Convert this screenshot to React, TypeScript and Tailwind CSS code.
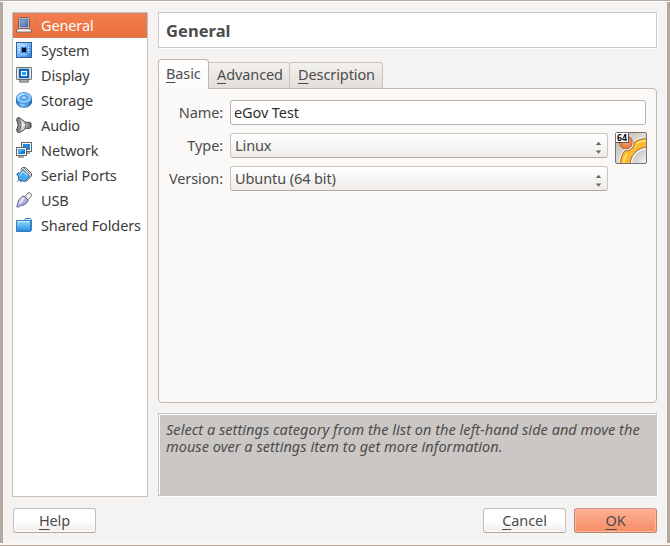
import type { ReactNode } from "react";

const Laptop = () => (
  <svg width="16" height="16" viewBox="0 0 16 16">
    <defs>
      <linearGradient id="lap" x1="0" y1="0" x2="1" y2="1">
        <stop offset="0" stopColor="#8fb0dc" />
        <stop offset="1" stopColor="#4672b4" />
      </linearGradient>
    </defs>
    <rect x="2.5" y=".5" width="11" height="11" rx="1" fill="#e8dcd6" stroke="#7d5f5c" />
    <rect x="4" y="2" width="8" height="8" fill="url(#lap)" stroke="#4a5272" strokeWidth=".6" />
    <path d="M2 11.5h12l1.5 2v1.7H.5v-1.7z" fill="#ded6d2" stroke="#7d5f5c" strokeWidth=".9" />
    <path d="M3 13.5h10" stroke="#fff" />
  </svg>
);

const Chip = () => (
  <svg width="16" height="16" viewBox="0 0 16 16">
    <defs>
      <linearGradient id="chip" x1="0" y1="0" x2="1" y2="1">
        <stop offset="0" stopColor="#c9e5ff" />
        <stop offset=".5" stopColor="#6db0f8" />
        <stop offset="1" stopColor="#2f78dc" />
      </linearGradient>
    </defs>
    <rect x=".5" y=".5" width="15" height="15" fill="url(#chip)" stroke="#345f9d" />
    <path d="M5 3h1v1H5zM7.500 2.500h1v2h-1zM10 3h1v1h-1zM5 12h1v1H5zM7.500 11.500h1v2h-1zM10 12h1v1h-1zM3 5h1v1H3zM2.500 7.500h2v1h-2zM3 10h1v1H3zM12 5h1v1h-1zM11.500 7.500h2v1h-2zM12 10h1v1h-1z" fill="#f0f9ff" />
    <rect x="5" y="5" width="6" height="6" fill="#3a86dc" />
    <rect x="6" y="6" width="4" height="4" fill="#07132c" />
  </svg>
);

const Monitor = () => (
  <svg width="16" height="16" viewBox="0 0 16 16">
    <path d="M5 12h6v1.500h1.500v1.800h-9v-1.800H5z" fill="#aaa" stroke="#777" strokeWidth=".8" />
    <rect x=".5" y=".5" width="15" height="12" rx=".5" fill="#f4f4f0" stroke="#6d706e" />
    <rect x="3" y="2" width="10" height="9" fill="#0b6fd0" stroke="#154d92" strokeWidth=".6" />
    <rect x="5.500" y="4.500" width="5" height="4" fill="#29a2ee" stroke="#fff" />
  </svg>
);

const Disk = () => (
  <svg width="16" height="16" viewBox="0 0 16 16">
    <defs>
      <linearGradient id="disk" x1="0" y1="0" x2="1" y2="0">
        <stop offset="0" stopColor="#1974d6" />
        <stop offset=".4" stopColor="#8bd0ff" />
        <stop offset="1" stopColor="#1663bf" />
      </linearGradient>
    </defs>
    <path d="M.5 6v4c0 3 3.300 5.300 7.500 5.300s7.500-2.300 7.500-5.300V6z" fill="url(#disk)" stroke="#225ba5" strokeWidth=".8" />
    <ellipse cx="8" cy="6" rx="7.500" ry="5.500" fill="#8fd0ff" stroke="#407fc5" strokeWidth=".8" />
    <ellipse cx="8" cy="6" rx="5.300" ry="3.600" fill="#5fb0f5" />
    <path d="M2 6Q3.500 2 8 1.800" stroke="#e1f5ff" fill="none" />
    <ellipse cx="8" cy="5.500" rx="2.400" ry="1.500" fill="#e6f6ff" stroke="#2873c6" strokeWidth=".8" />
  </svg>
);

const Speaker = () => (
  <svg width="16" height="16" viewBox="0 0 16 16">
    <defs>
      <linearGradient id="spk" x1="0" y1="0" x2="1" y2="0">
        <stop offset="0" stopColor="#666" />
        <stop offset=".4" stopColor="#dededa" />
        <stop offset="1" stopColor="#666" />
      </linearGradient>
    </defs>
    <path d="M1.500.7h2L9 5l1.500.3h3.500l1 1v4l-1 1h-4L4 15.300H1.500L.7 13l1.500-5L.7 3z" fill="url(#spk)" stroke="#454545" strokeWidth="1" />
    <path d="M3.500 2.500q3 5.500 0 11M9.500 5.500v5" fill="none" stroke="#555" strokeWidth=".9" />
    <path d="M5.500 8h4" stroke="#fff" strokeWidth="1.200" />
  </svg>
);

const Network = () => (
  <svg width="16" height="16" viewBox="0 0 16 16">
    <path d="M10 9v2h4M3 13v2h5" stroke="#858583" strokeWidth="1.600" fill="none" />
    <rect x="5.500" y=".5" width="10" height="9" fill="#f7f7f4" stroke="#666" />
    <rect x="7" y="2" width="7" height="6" fill="#2085dc" />
    <rect x=".5" y="5.500" width="10" height="8" fill="#f7f7f4" stroke="#666" />
    <rect x="2" y="7" width="7" height="5" fill="#1681dd" />
    <path d="M2 12l7-5H2z" fill="#4ba9ef" />
  </svg>
);

const Serial = () => (
  <svg width="16" height="16" viewBox="0 0 16 16">
    <path d="M4.500 2.500L6.500.6h3l6 6v2.600l-6 5.800" fill="#e6e6e6" stroke="#555" strokeWidth="1" />
    <path d="M8 1l6.500 6.500M6.500 2l7 7" stroke="#555" strokeWidth=".7" />
    <path d="M6.500 2.800l7 6.500-4.500 5-6-1-.7-4.300L.7 7.500l1.300-1.700 1.600.6z" fill="#42adf3" stroke="#205c94" strokeWidth=".9" />
    <path d="M4 8.500l3-4 4.500 4" stroke="#b5e4ff" fill="none" strokeWidth="1.200" />
    <path d="M3.300 12.500L1 14.800M6 13.500L4.500 15.500" stroke="#56738c" strokeWidth="1" />
  </svg>
);

const Usb = () => (
  <svg width="16" height="16" viewBox="0 0 16 16">
    <defs>
      <linearGradient id="usb" x1="0" y1="0" x2="1" y2="1">
        <stop offset="0" stopColor="#fafaff" />
        <stop offset=".5" stopColor="#b8b8e7" />
        <stop offset="1" stopColor="#7777b1" />
      </linearGradient>
    </defs>
    <path d="M9 4.500L12 .8h2l1.400 1.400v2L11.500 8z" fill="#f4f4f6" stroke="#737373" />
    <path d="M8 4l4.200 4.200c-.6 3-4 5.200-8 5.600L1.800 15.500.6 14.300l1.200-2.500C2 8 4.800 4.600 8 4z" fill="url(#usb)" stroke="#555581" strokeWidth=".9" />
    <path d="M4 11.500L8 6" stroke="#fff" strokeWidth="1.100" />
  </svg>
);

const Folder = () => (
  <svg width="16" height="16" viewBox="0 0 16 16">
    <defs>
      <linearGradient id="fold" x1="0" y1="0" x2="0" y2="1">
        <stop offset="0" stopColor="#9bddff" />
        <stop offset="1" stopColor="#268add" />
      </linearGradient>
    </defs>
    <path d="M8.500 3.500L9.500 1.500h5l1 1v11H2" fill="#d8f2ff" stroke="#2c7bbd" strokeWidth=".9" />
    <path d="M.5 3.500h14v11H.5z" fill="url(#fold)" stroke="#2273b8" strokeWidth=".9" />
    <path d="M1.400 4.500h12.200" stroke="#c9f0ff" />
  </svg>
);

const RING = "M5.500 33C5.500 27 7 22 10 18.500c4 1.500 9.500-2 9-8C22.500 8 27 6.500 33 6.500V15A18 18 0 0 0 15 33z";

const UbuntuIcon = () => (
  <svg width="32" height="32" viewBox="0 0 32 32">
    <defs>
      <linearGradient id="ubg" x1="0" y1="0" x2="1" y2="1">
        <stop offset="0" stopColor="#b9b3a4" />
        <stop offset=".5" stopColor="#dedad0" />
        <stop offset="1" stopColor="#f4f2ee" />
      </linearGradient>
      <linearGradient id="hole" x1="0" y1="0" x2="1" y2="1">
        <stop offset="0" stopColor="#b5b1aa" />
        <stop offset=".4" stopColor="#eeedeb" />
      </linearGradient>
      <linearGradient id="ring" x1="0" y1="0" x2="1" y2="1">
        <stop offset="0" stopColor="#ffd04a" />
        <stop offset="1" stopColor="#f7a512" />
      </linearGradient>
      <radialGradient id="ball" cx=".5" cy=".4" r=".6">
        <stop offset="0" stopColor="#ffb780" />
        <stop offset="1" stopColor="#df6a30" />
      </radialGradient>
      <clipPath id="ubclip">
        <rect x="1" y="1" width="30" height="30" rx="1" />
      </clipPath>
    </defs>
    <rect x=".5" y=".5" width="31" height="31" rx="1.500" fill="url(#ubg)" />
    <g clipPath="url(#ubclip)">
      <circle cx="11" cy="10.500" r="6.500" fill="url(#ball)" stroke="#a8532f" strokeWidth=".9" />
      <path d={RING} fill="none" stroke="#f3efe6" strokeWidth="3" />
      <path d={RING} fill="url(#ring)" stroke="#96583a" strokeWidth=".9" />
      <path d="M8.500 33c0-5 1.500-8.500 4-11M22 11c3-1.500 6-2.200 11-2.200" stroke="#ffe27c" strokeWidth="1.500" fill="none" />
      <circle cx="33" cy="33" r="16.500" fill="url(#hole)" stroke="#fff" strokeWidth="1" />
    </g>
    <rect x=".5" y=".5" width="31" height="31" rx="1.500" fill="none" stroke="#75717b" />
    <rect x="1" y="1" width="12" height="9" fill="#fff" />
    <path d="M13.500 1v9.500H1" fill="none" stroke="#55525c" />
    <text x="1.700" y="9" fontFamily="DejaVu Sans" fontWeight="bold" fontSize="9" textLength="10.500" lengthAdjust="spacingAndGlyphs" fill="#111">64</text>
  </svg>
);

const items = [
  { label: "General", icon: <Laptop /> },
  { label: "System", icon: <Chip /> },
  { label: "Display", icon: <Monitor /> },
  { label: "Storage", icon: <Disk /> },
  { label: "Audio", icon: <Speaker /> },
  { label: "Network", icon: <Network /> },
  { label: "Serial Ports", icon: <Serial /> },
  { label: "USB", icon: <Usb /> },
  { label: "Shared Folders", icon: <Folder /> },
];

function Mnemonic({ text }: { text: string }) {
  return (
    <span>
      <span className="underline decoration-1 underline-offset-[3px]">{text[0]}</span>
      {text.slice(1)}
    </span>
  );
}

function Combo({ children }: { children: ReactNode }) {
  return (
    <div className="flex h-[25px] w-[378px] items-center justify-between rounded-[3px] border border-[#cdc6be] border-b-[#b3a89e] bg-linear-to-b from-white to-[#eeecea] pr-[5px] pl-1">
      <span className="pb-0.5">{children}</span>
      <svg width="7" height="13" viewBox="0 0 7 13" className="mt-[3px]">
        <path d="M.8 4L3.500.8 6.200 4zM.8 9.500l2.700 3.200L6.200 9.500z" fill="#686662" />
      </svg>
    </div>
  );
}

function Button({ text, primary }: { text: string; primary?: boolean }) {
  return (
    <button
      className={
        primary
          ? "h-[25px] w-[83px] rounded-[3px] border border-[#b98570] border-t-[#c99a86] bg-linear-to-b from-[#ffb194] to-[#f58d65] pb-0.5 shadow-[inset_0_0_0_1px_#ffb89d]"
          : "h-[25px] w-[83px] rounded-[3px] border border-[#c5bdb5] border-b-[#b0a59b] bg-linear-to-b from-white from-50% to-[#efedeb] pb-0.5 shadow-[inset_0_0_0_1px_#fff]"
      }
    >
      <Mnemonic text={text} />
    </button>
  );
}

export default function App() {
  return (
    <div className="flex h-[546px] w-[670px] flex-col bg-[#f4f3f2] font-['Noto_Sans',sans-serif] text-[14.5px] leading-[18px] tracking-[-0.1px] text-[#4c4c4c]">
      <div className="h-px shrink-0 bg-[#b9ab9f]" />
      <div className="h-px shrink-0 bg-white" />
      <div className="flex h-[541px] shrink-0 flex-col border-x-[3px] border-[#b6aaa0] pt-[10px] pr-[10px] pl-[9px]">
        <div className="flex h-[485px] gap-[10px]">
          <nav className="h-[485px] w-[136px] shrink-0 border border-[#c9c0b5] bg-white tracking-[-0.13px] text-[#3c3c3c]">
            {items.map((it, i) => (
              <div
                key={it.label}
                className={
                  i === 0
                    ? "flex h-[25px] bg-linear-to-b from-[#f47e50] to-[#e96e3c] text-white outline-1 -outline-offset-1 outline-dotted outline-[#b58c78]"
                    : "flex h-[25px]"
                }
              >
                <div
                  className={
                    i === 0
                      ? "h-full w-[23px] shrink-0 border-r border-dotted border-[#a8836f] pt-1 pl-[3px]"
                      : "h-full w-[23px] shrink-0 pt-1 pl-[3px]"
                  }
                >
                  {it.icon}
                </div>
                <span className="pt-[3px] pl-[5px] whitespace-nowrap">{it.label}</span>
              </div>
            ))}
          </nav>
          <main className="flex w-[500px] flex-col">
            <h1 className="flex h-9 w-[499px] shrink-0 items-center border border-[#cbc9c8] bg-white pt-0.5 pl-[7px] text-[16.5px] font-bold tracking-[0.05px] shadow-[1px_1px_0_#fff]">
              General
            </h1>
            <div className="z-10 mt-[11px] -mb-px flex h-[30px] shrink-0 items-end">
              <div className="h-[30px] w-[51px] rounded-t-[4px] border border-b-0 border-[#c3b7aa] bg-linear-to-b from-white to-[#fbfaf9] pt-[4px] pl-[7px]">
                <Mnemonic text="Basic" />
              </div>
              <div className="mb-px h-[26px] w-[81px] rounded-tr-[3px] border border-b-0 border-l-0 border-[#cbc1b6] bg-linear-to-b from-[#f3f1ef] to-[#e2deda] pt-[2px] pl-2">
                <Mnemonic text="Advanced" />
              </div>
              <div className="mb-px h-[26px] w-[93px] rounded-tr-[3px] border border-b-0 border-l-0 border-[#cbc1b6] bg-linear-to-b from-[#f3f1ef] to-[#e2deda] pt-[2px] pl-2">
                <Mnemonic text="Description" />
              </div>
            </div>
            <section className="flex h-[315px] shrink-0 flex-col gap-2 rounded-[4px] rounded-tl-none border border-[#c3b8ac] bg-[#faf9f8] pt-[11px]">
              <div className="flex h-[25px] items-center">
                <label className="mr-[7px] w-16 pb-0.5 text-right">Name:</label>
                <div className="flex h-[25px] w-[416px] items-center rounded-[3px] border border-[#b9afa6] bg-white pb-0.5 pl-[3px] text-[#2f2f2f]">eGov Test</div>
              </div>
              <div className="flex h-[25px] items-center">
                <label className="mr-[7px] w-16 pb-0.5 text-right">Type:</label>
                <Combo>Linux</Combo>
                <div className="mt-[5px] ml-[7px]">
                  <UbuntuIcon />
                </div>
              </div>
              <div className="flex h-[25px] items-center">
                <label className="mr-[7px] w-16 pb-0.5 text-right">Version:</label>
                <Combo>Ubuntu (64 bit)</Combo>
              </div>
            </section>
            <p className="mt-[10px] h-[83px] w-[499px] shrink-0 border border-[#c9c5c2] bg-[#cbc7c4] pt-[7px] pl-[7px] leading-[17px] tracking-[0.035px] whitespace-nowrap italic shadow-[1px_1px_0_#fff,inset_1px_1px_0_#fff]">
              Select a settings category from the list on the left-hand side and move the
              <br />
              mouse over a settings item to get more information.
            </p>
          </main>
        </div>
        <footer className="mt-[11px] flex w-[645px] gap-2 pl-px">
          <Button text="Help" />
          <div className="flex-1" />
          <Button text="Cancel" />
          <Button text="OK" primary />
        </footer>
      </div>
      <div className="h-[2px] shrink-0 bg-[#faf9f8]" />
      <div className="h-px shrink-0 bg-[#b9ab9f]" />
    </div>
  );
}
